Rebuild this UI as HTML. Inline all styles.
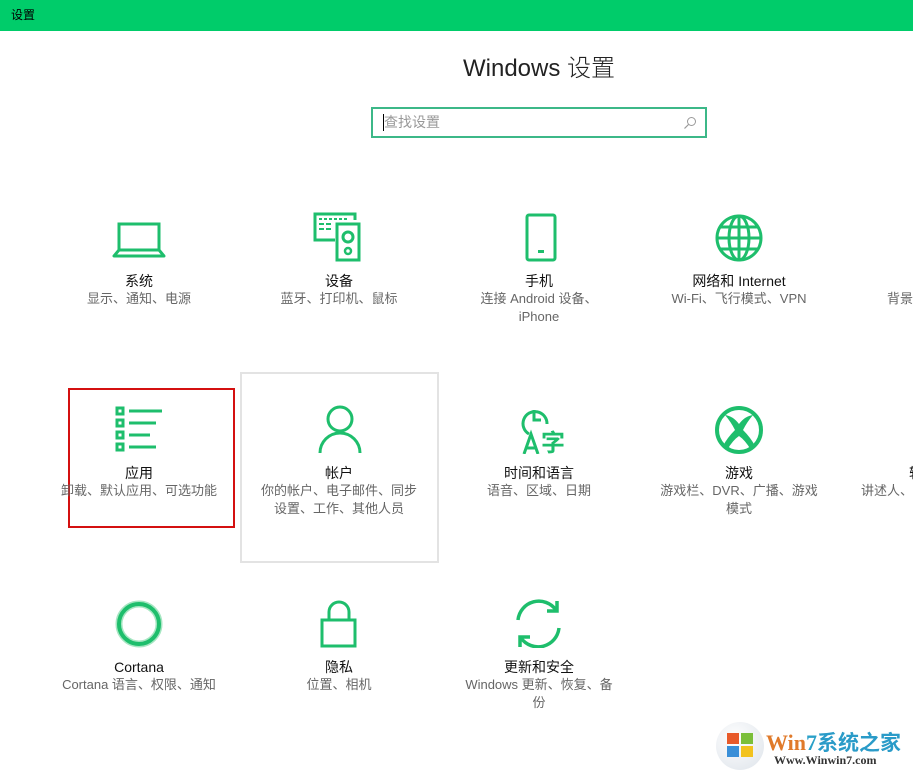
<!DOCTYPE html>
<html style="width:913px;height:771px;overflow:hidden"><head><meta charset="utf-8"><style>
*{margin:0;padding:0;box-sizing:border-box}
body{width:913px;height:771px;overflow:hidden;background:#fff;position:relative;font-family:"Liberation Sans","Noto Sans CJK SC",sans-serif}
.top{position:absolute;left:0;top:0;width:913px;height:31px;background:#00cc6a;color:#000;font-size:12px;line-height:31px;padding-left:11px}
h1{position:absolute;left:0;width:1078px;top:48px;text-align:center;font-weight:300;font-size:24px;color:#222}
.search{position:absolute;left:371px;top:107px;width:336px;height:31px;border:2px solid #3cb888;font-size:14px;color:#999;line-height:27px;padding-left:11px}
.search:before{content:"";position:absolute;left:10px;top:5px;width:1px;height:17px;background:#000}
.item{position:absolute;width:200px;text-align:center;overflow:hidden}
.item svg{display:block;margin:0 auto}
.t{font-size:14px;color:#111;margin-top:10px;line-height:18px}
.s{font-size:13px;color:#666;line-height:18px;padding:0 21px}
.hover{position:absolute;left:240px;top:372px;width:199px;height:191px;border:2px solid #e3e3e3}
.red{position:absolute;left:68px;top:388px;width:167px;height:140px;border:2px solid #d41010}
</style></head><body>
<div class="top">设置</div>
<h1>Windows 设置</h1>
<div class="search">查找设置<svg style="position:absolute;right:8px;top:7px" width="14" height="14" viewBox="0 0 14 14"><circle cx="8.5" cy="5.5" r="4" fill="none" stroke="#999" stroke-width="1"/><path d="M5.5 8.5L1.5 12.5" stroke="#999" stroke-width="1.2"/></svg></div>
<div class="hover"></div>
<div class="red"></div>

<div class="item" style="left:39px;top:212px">
<svg width="56" height="50" viewBox="0 0 56 50"><rect x="8" y="12" width="40" height="26" fill="none" stroke="#1ebe6c" stroke-width="3"/><path d="M8 38 L3 44 L53 44 L48 38" fill="none" stroke="#1ebe6c" stroke-width="3" stroke-linejoin="round"/></svg>
<div class="t">系统</div><div class="s">显示、通知、电源</div></div>

<div class="item" style="left:239px;top:212px">
<svg width="56" height="50" viewBox="0 0 56 50"><path d="M24 28 H4 V2 H44 V8" fill="none" stroke="#1ebe6c" stroke-width="3"/><g fill="#1ebe6c"><rect x="8" y="6" width="3" height="2"/><rect x="13" y="6" width="3" height="2"/><rect x="18" y="6" width="3" height="2"/><rect x="23" y="6" width="3" height="2"/><rect x="28" y="6" width="3" height="2"/><rect x="33" y="6" width="3" height="2"/><rect x="8" y="11" width="5" height="2"/><rect x="15" y="11" width="5" height="2"/><rect x="8" y="16" width="5" height="2"/><rect x="15" y="16" width="5" height="2"/></g><rect x="26" y="12" width="22" height="36" fill="none" stroke="#1ebe6c" stroke-width="3"/><circle cx="37" cy="25" r="5" fill="none" stroke="#1ebe6c" stroke-width="3"/><circle cx="37" cy="39" r="3" fill="none" stroke="#1ebe6c" stroke-width="2.5"/></svg>
<div class="t">设备</div><div class="s">蓝牙、打印机、鼠标</div></div>

<div class="item" style="left:439px;top:212px">
<svg width="56" height="50" viewBox="0 0 56 50"><rect x="16" y="3" width="28" height="45" rx="2" fill="none" stroke="#1ebe6c" stroke-width="3"/><rect x="27" y="38" width="6" height="3" fill="#1ebe6c"/></svg>
<div class="t">手机</div><div class="s">连接 Android 设备、<br>iPhone</div></div>

<div class="item" style="left:639px;top:212px">
<svg width="56" height="50" viewBox="0 0 56 50"><g fill="none" stroke="#1ebe6c" stroke-width="3"><circle cx="28" cy="26" r="22"/><ellipse cx="28" cy="26" rx="10" ry="22"/><path d="M6 26H50M10 15H46M10 37H46M28 4V48"/></g></svg>
<div class="t">网络和 Internet</div><div class="s">Wi-Fi、飞行模式、VPN</div></div>

<div class="item" style="left:839px;top:212px;width:74px;text-align:left">
<svg width="56" height="50"></svg>
<div class="t">&nbsp;</div><div class="s" style="padding:0 0 0 48px;white-space:nowrap">背景、锁屏</div></div>

<div class="item" style="left:39px;top:404px">
<svg width="56" height="50" viewBox="0 0 56 50"><g fill="none" stroke="#1ebe6c" stroke-width="3"><rect x="6" y="4" width="6" height="6"/><rect x="6" y="16" width="6" height="6"/><rect x="6" y="28" width="6" height="6"/><rect x="6" y="40" width="6" height="6"/><path d="M18 7H51M18 19H45M18 31H39M18 43H45"/></g></svg>
<div class="t">应用</div><div class="s" style="padding:0">卸载、默认应用、可选功能</div></div>

<div class="item" style="left:239px;top:404px">
<svg width="56" height="50" viewBox="0 0 56 50"><g fill="none" stroke="#1ebe6c" stroke-width="3"><circle cx="29" cy="15" r="12"/><path d="M9 49 A20 20 0 0 1 49 49"/></g></svg>
<div class="t">帐户</div><div class="s">你的帐户、电子邮件、同步<br>设置、工作、其他人员</div></div>

<div class="item" style="left:439px;top:404px">
<svg width="56" height="50" viewBox="0 0 56 50"><g fill="none" stroke="#1ebe6c" stroke-width="3"><path d="M18 30 A12 12 0 1 1 36 20"/><path d="M23 6V16H30"/><path d="M13 50L20 30L27 50M15 44H25"/></g><text x="30" y="47" font-size="24" font-weight="bold" fill="#1ebe6c" font-family="Noto Sans CJK SC">字</text></svg>
<div class="t">时间和语言</div><div class="s">语音、区域、日期</div></div>

<div class="item" style="left:639px;top:404px">
<svg width="56" height="50" viewBox="0 0 56 50"><circle cx="28" cy="26" r="22" fill="none" stroke="#1ebe6c" stroke-width="4"/><path d="M14 11 Q22 12 28 20 Q34 12 42 11 Q36 18 32 26 Q40 34 44 42 L40 46 Q34 36 28 32 Q22 36 16 46 L12 42 Q16 34 24 26 Q20 18 14 11Z" fill="#1ebe6c"/></svg>
<div class="t">游戏</div><div class="s">游戏栏、DVR、广播、游戏<br>模式</div></div>

<div class="item" style="left:839px;top:404px;width:74px;text-align:left">
<svg width="56" height="50"></svg>
<div class="t" style="padding-left:70px;white-space:nowrap">轻松</div><div class="s" style="padding:0 0 0 22px;white-space:nowrap">讲述人、</div></div>

<div class="item" style="left:39px;top:598px">
<svg width="56" height="50" viewBox="0 0 56 50"><circle cx="28" cy="26" r="20" fill="none" stroke="#a6e6c2" stroke-width="7"/><circle cx="28" cy="26" r="20" fill="none" stroke="#1ebe6c" stroke-width="4"/></svg>
<div class="t">Cortana</div><div class="s" style="padding:0">Cortana 语言、权限、通知</div></div>

<div class="item" style="left:239px;top:598px">
<svg width="56" height="50" viewBox="0 0 56 50"><g fill="none" stroke="#1ebe6c" stroke-width="3"><rect x="11" y="22" width="33" height="26"/><path d="M18 22V14A10 10 0 0 1 38 14V22"/></g></svg>
<div class="t">隐私</div><div class="s">位置、相机</div></div>

<div class="item" style="left:439px;top:598px">
<svg width="56" height="50" viewBox="0 0 56 50"><g fill="none" stroke="#1ebe6c" stroke-width="3.5"><path d="M7 22 A21 21 0 0 1 45 12"/><path d="M48 30 A21 21 0 0 1 10 40"/><path d="M46 3V13H36"/><path d="M9 49V39H19"/></g></svg>
<div class="t">更新和安全</div><div class="s">Windows 更新、恢复、备<br>份</div></div>

<div style="position:absolute;left:716px;top:722px;width:48px;height:48px;border-radius:50%;background:radial-gradient(circle at 40% 35%,#fff,#dde3ea)"></div>
<div style="position:absolute;left:727px;top:733px;width:12px;height:11px;background:#e85a2a"></div>
<div style="position:absolute;left:741px;top:733px;width:12px;height:11px;background:#7bbf3a"></div>
<div style="position:absolute;left:727px;top:746px;width:12px;height:11px;background:#3a8fd8"></div>
<div style="position:absolute;left:741px;top:746px;width:12px;height:11px;background:#f2c21e"></div>
<div style="position:absolute;left:766px;top:727px;font:bold 22px 'Liberation Serif',serif;color:#e07a2a;white-space:nowrap">Win<span style="color:#2aa0c8">7</span><span style="font-family:'Noto Sans CJK SC';color:#2a9bc8;font-size:21px">系统之家</span></div>
<div style="position:absolute;left:774px;top:753px;font:bold 12px 'Liberation Serif',serif;color:#333">Www.Winwin7.com</div>
</body></html>
